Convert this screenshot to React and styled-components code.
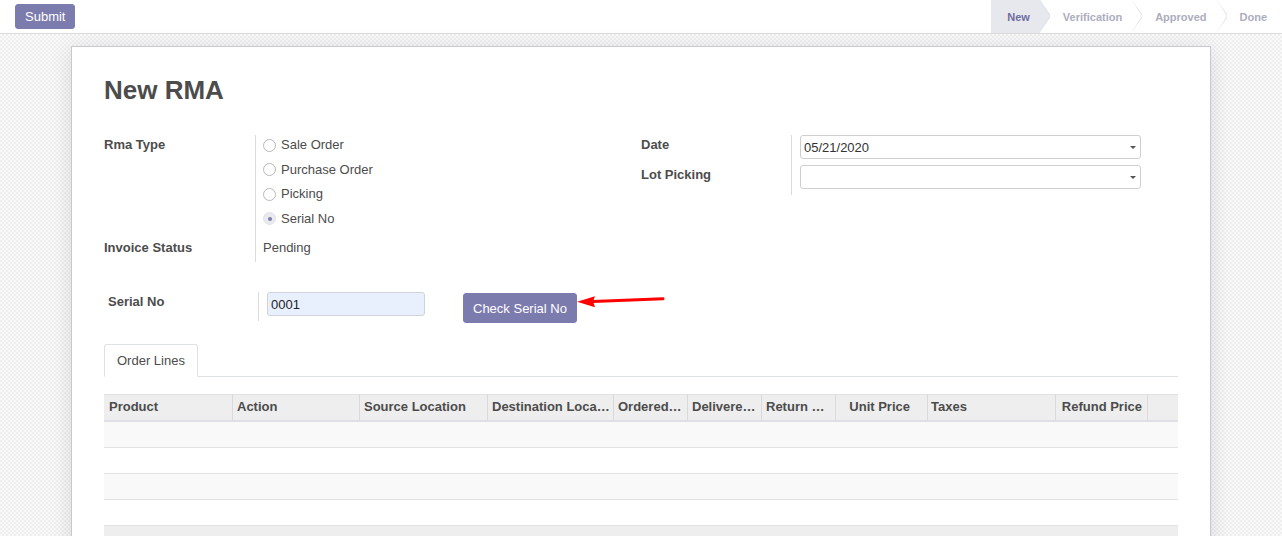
import React from 'react';
import styled, { createGlobalStyle } from 'styled-components';

const GlobalStyle = createGlobalStyle`
  html, body {
    margin: 0;
    padding: 0;
  }

  body {
    font-family: "Liberation Sans", Arial, sans-serif;
    font-size: 13px;
    color: #4c4c4c;
    background: #fff;
  }
`;

const Page = styled.div`
  height: 536px;
  overflow: hidden;
  display: flex;
  flex-direction: column;
`;

const ControlPanel = styled.div`
  display: flex;
  justify-content: space-between;
  height: 33px;
  border-bottom: 1px solid #dcdcdc;
  background: #fff;
`;

const Actions = styled.div`
  padding: 4px 0 0 15px;
`;

const PrimaryButton = styled.button`
  font-family: inherit;
  font-size: 13px;
  color: #fff;
  background: #7c7bad;
  border: 1px solid #7c7bad;
  border-radius: 3px;
  height: ${({ $tall }) => ($tall ? 30 : 25)}px;
  padding: 0 9px;
  cursor: pointer;
`;

const StatusBar = styled.div`
  display: flex;
  height: 33px;
`;

const Step = styled.div`
  position: relative;
  display: flex;
  align-items: center;
  padding: 0 ${({ $last }) => ($last ? 15 : 10)}px 0 ${({ $first }) => ($first ? 16 : 13)}px;
  margin-right: ${({ $last }) => ($last ? 0 : 10)}px;
  font-size: 11px;
  font-weight: bold;
  color: ${({ $active }) => ($active ? '#6f6e9e' : '#acadbd')};
  background: ${({ $active }) => ($active ? '#e6e8ee' : '#fff')};

  &::before,
  &::after {
    content: '';
    position: absolute;
    top: 0;
    border-top: 16.5px solid transparent;
    border-bottom: 16.5px solid transparent;
    display: ${({ $last }) => ($last ? 'none' : 'block')};
  }

  &::before {
    right: -11px;
    border-left: 11px solid #d8d8d8;
  }

  &::after {
    right: -10px;
    border-left: 10px solid ${({ $active }) => ($active ? '#e6e8ee' : '#fff')};
  }
`;

const SheetBg = styled.div`
  flex: 1;
  padding-top: 12px;
  background: repeating-conic-gradient(#efefef 0% 25%, #f9f9f9 0% 50%) 0 0 / 4px 4px;
`;

const Sheet = styled.div`
  width: 1140px;
  min-height: 560px;
  margin: 0 auto;
  box-sizing: border-box;
  padding: 28px 32px 0;
  background: #fff;
  border: 1px solid #c8c8d3;
  box-shadow: 0 4px 22px rgba(0, 0, 0, 0.12);
`;

const Title = styled.h1`
  margin: 0;
  font-size: 26px;
  line-height: 31px;
  font-weight: bold;
  color: #4c4c4c;
`;

const Groups = styled.div`
  display: flex;
  margin-top: 29px;
`;

const Group = styled.div`
  width: 537px;
  box-sizing: border-box;
  padding-right: ${({ $padRight }) => $padRight || 0}px;
`;

const FieldGrid = styled.div`
  display: grid;
  grid-template-columns: ${({ $labelWidth }) => $labelWidth}px 1fr;
`;

const Label = styled.div`
  padding-top: 1px;
  font-weight: bold;
  line-height: 18px;
`;

const Value = styled.div`
  border-left: 1px solid #dcdcdc;
  padding-left: ${({ $pad }) => $pad}px;
  padding-bottom: ${({ $bottom }) => $bottom || 0}px;
  line-height: 18px;
`;

const PlainText = styled.div`
  padding-top: 1px;
`;

const RadioList = styled.div`
  display: flex;
  flex-direction: column;
  gap: 6.5px;
  padding-top: 1px;
`;

const RadioItem = styled.label`
  display: flex;
  align-items: center;
  gap: 5px;
  height: 18px;
`;

const RadioDot = styled.span`
  display: flex;
  align-items: center;
  justify-content: center;
  width: 13px;
  height: 13px;
  box-sizing: border-box;
  border-radius: 50%;
  border: 1px solid ${({ $checked }) => ($checked ? '#e2e2e8' : '#b9b9b9')};
  background: ${({ $checked }) => ($checked ? '#e9e9ee' : '#fff')};

  &::after {
    content: '';
    display: ${({ $checked }) => ($checked ? 'block' : 'none')};
    width: 4px;
    height: 4px;
    border-radius: 50%;
    background: #7c7bad;
  }
`;

const Select = styled.div`
  display: flex;
  align-items: center;
  justify-content: space-between;
  height: 24px;
  box-sizing: border-box;
  padding: 1px 4px 0 3px;
  border: 1px solid #cfcfcf;
  border-radius: 3px;
  color: #333;
`;

const Caret = styled.span`
  width: 0;
  height: 0;
  border-left: 3.5px solid transparent;
  border-right: 3.5px solid transparent;
  border-top: 3.5px solid #555;
`;

const SerialRow = styled.div`
  display: flex;
  align-items: flex-start;
  margin-top: 30px;
  padding-left: 4px;
`;

const SerialInput = styled.div`
  width: 158px;
  height: 24px;
  box-sizing: border-box;
  padding: 1px 3px 0;
  display: flex;
  align-items: center;
  background: #e8f0fe;
  border: 1px solid #cfd3dc;
  border-radius: 3px;
  color: #222;
`;

const CheckButton = styled(PrimaryButton)`
  margin: 1px 0 0 38px;
`;

const Arrow = styled.svg`
  display: block;
  margin-top: 2px;
`;

const TabBar = styled.div`
  display: flex;
  margin-top: 21px;
  border-bottom: 1px solid #dee2e6;
`;

const Tab = styled.div`
  height: 33px;
  box-sizing: border-box;
  line-height: 31px;
  padding: 0 12px;
  margin-bottom: -1px;
  background: #fff;
  border: 1px solid #dee2e6;
  border-bottom-color: #fff;
  border-radius: 3px 3px 0 0;
  color: #4c4c4c;
`;

const Table = styled.table`
  width: 1074px;
  margin-top: 17px;
  table-layout: fixed;
  border-collapse: separate;
  border-spacing: 0;
`;

const Th = styled.th`
  height: 23px;
  padding: 0 ${({ $padRight }) => $padRight || 3}px 2px ${({ $padLeft }) => $padLeft || 4}px;
  text-align: ${({ $align }) => $align || 'left'};
  font-weight: bold;
  white-space: nowrap;
  overflow: hidden;
  text-overflow: ellipsis;
  background: #eee;
  border-top: 1px solid #e2e2e2;
  border-bottom: 2px solid #dfe0e6;
  border-left: 1px solid #dadada;

  &:first-child {
    border-left: none;
    padding-left: 5px;
  }
`;

const Td = styled.td`
  height: 25px;
  padding: 0;
  background: ${({ $tone }) => $tone};
  border-bottom: 1px solid #e2e2e2;
`;

const columns = [
  { name: 'Product', width: 128 },
  { name: 'Action', width: 127 },
  { name: 'Source Location', width: 128 },
  { name: 'Destination Location', width: 126 },
  { name: 'Ordered Qty', width: 74 },
  { name: 'Delivered Qty', width: 74 },
  { name: 'Return Qty', width: 74 },
  { name: 'Unit Price', width: 92, align: 'right', padRight: 17 },
  { name: 'Taxes', width: 128, padLeft: 3 },
  { name: 'Refund Price', width: 92, align: 'right', padRight: 5 },
  { name: '', width: 31 },
];

const rowTones = ['#f9f9f9', '#fff', '#f9f9f9', '#fff', '#eee'];

const steps = ['New', 'Verification', 'Approved', 'Done'];

const rmaTypes = ['Sale Order', 'Purchase Order', 'Picking', 'Serial No'];

function App() {
  return (
    <Page>
      <GlobalStyle />
      <ControlPanel>
        <Actions>
          <PrimaryButton>Submit</PrimaryButton>
        </Actions>
        <StatusBar>
          {steps.map((step, i) => (
            <Step
              key={step}
              $active={i === 0}
              $first={i === 0}
              $last={i === steps.length - 1}
            >
              {step}
            </Step>
          ))}
        </StatusBar>
      </ControlPanel>

      <SheetBg>
        <Sheet>
          <Title>New RMA</Title>

          <Groups>
            <Group>
              <FieldGrid $labelWidth={151}>
                <Label>Rma Type</Label>
                <Value $pad={7} $bottom={10.5}>
                  <RadioList>
                    {rmaTypes.map((type) => (
                      <RadioItem key={type}>
                        <RadioDot $checked={type === 'Serial No'} />
                        {type}
                      </RadioItem>
                    ))}
                  </RadioList>
                </Value>
                <Label>Invoice Status</Label>
                <Value $pad={7} $bottom={5}>
                  <PlainText>Pending</PlainText>
                </Value>
              </FieldGrid>
            </Group>

            <Group $padRight={37}>
              <FieldGrid $labelWidth={150}>
                <Label>Date</Label>
                <Value $pad={8} $bottom={6}>
                  <Select>
                    05/21/2020
                    <Caret />
                  </Select>
                </Value>
                <Label>Lot Picking</Label>
                <Value $pad={8} $bottom={6}>
                  <Select>
                    <span />
                    <Caret />
                  </Select>
                </Value>
              </FieldGrid>
            </Group>
          </Groups>

          <SerialRow>
            <FieldGrid $labelWidth={150}>
              <Label>Serial No</Label>
              <Value $pad={8} $bottom={5}>
                <SerialInput>0001</SerialInput>
              </Value>
            </FieldGrid>
            <CheckButton $tall>Check Serial No</CheckButton>
            <Arrow width="88" height="15" viewBox="0 0 88 15">
              <path d="M16 7.6 L86 4.8" stroke="#f00" strokeWidth="3" strokeLinecap="round" />
              <path d="M0 7.8 L18 2.2 L16 7.6 L18 13.2 Z" fill="#f00" />
            </Arrow>
          </SerialRow>

          <TabBar>
            <Tab>Order Lines</Tab>
          </TabBar>

          <Table>
            <colgroup>
              {columns.map((col, i) => (
                <col key={i} style={{ width: col.width }} />
              ))}
            </colgroup>
            <thead>
              <tr>
                {columns.map((col, i) => (
                  <Th
                    key={i}
                    $align={col.align}
                    $padRight={col.padRight}
                    $padLeft={col.padLeft}
                  >
                    {col.name}
                  </Th>
                ))}
              </tr>
            </thead>
            <tbody>
              {rowTones.map((tone, r) => (
                <tr key={r}>
                  <Td $tone={tone} colSpan={columns.length} />
                </tr>
              ))}
            </tbody>
          </Table>
        </Sheet>
      </SheetBg>
    </Page>
  );
}

export default App;
